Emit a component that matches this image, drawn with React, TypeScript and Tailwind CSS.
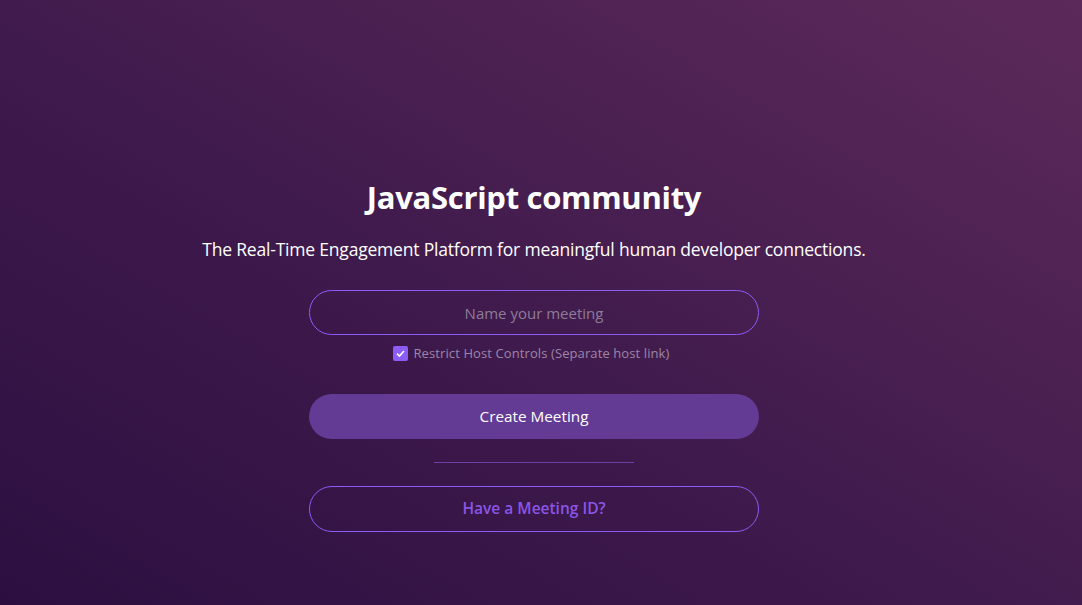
import React from "react";

export default function App() {
  return (
    <div
      className="w-[1082px] h-[605px] overflow-hidden bg-[linear-gradient(30deg,#2c0f40_0%,#3f1a4c_45%,#5c2a5a_100%)]"
      style={{ fontFamily: '"Open Sans", "Noto Sans", sans-serif' }}
    >
      <div className="w-[1068px] flex flex-col items-center">
        <h1 className="mt-[175px] text-[31px] leading-[44px] font-bold text-white tracking-[-0.3px]">
          JavaScript community
        </h1>
        <p className="mt-[17px] text-[17.5px] leading-[26px] text-white tracking-[-0.2px]">
          The Real-Time Engagement Platform for meaningful human developer connections.
        </p>
        <input
          className="mt-[28px] w-[450px] h-[45px] rounded-full border border-[#8b5cf6] bg-transparent text-center text-[15px] text-white placeholder-[#8d7b98] outline-none"
          placeholder="Name your meeting"
        />
        <label className="mt-[9px] pr-[6px] flex items-center gap-[6px] text-[13px] text-[#9d86a8] tracking-[0.1px]">
          <span className="w-[15px] h-[15px] rounded-[2px] bg-[#8b5cf6] flex items-center justify-center">
            <svg width="11" height="11" viewBox="0 0 12 12">
              <path d="M2.2 6.2 L4.8 8.7 L9.8 3.3" stroke="white" strokeWidth="1.8" fill="none" />
            </svg>
          </span>
          Restrict Host Controls (Separate host link)
        </label>
        <button className="mt-[30px] w-[450px] h-[45px] rounded-full bg-[#633a94] text-white text-[15.3px]">
          Create Meeting
        </button>
        <div className="mt-[23px] w-[200px] h-px bg-[#6b3fa3]" />
        <button className="mt-[23px] w-[450px] h-[46px] rounded-full border border-[#8b5cf6] text-[#8b55e6] font-semibold text-[15.5px]">
          Have a Meeting ID?
        </button>
      </div>
    </div>
  );
}
